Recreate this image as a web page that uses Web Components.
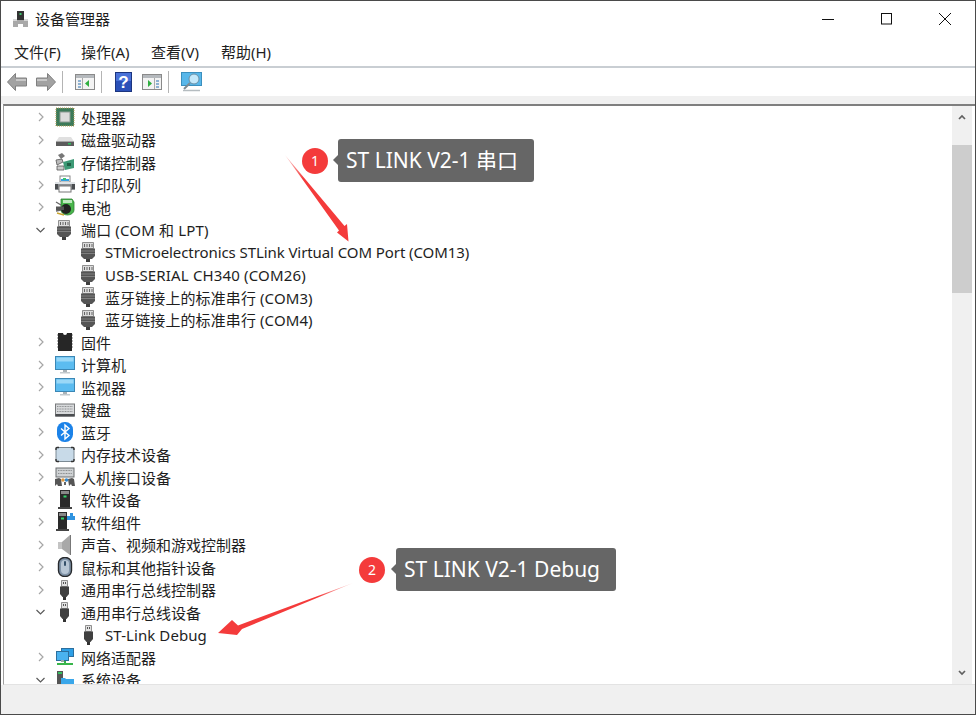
<!DOCTYPE html>
<html lang="zh">
<head>
<meta charset="utf-8">
<title>设备管理器</title>
<style>
  body { margin: 0; background: #fff; }
</style>
</head>
<body>
<device-window>
  <title-bar>设备管理器</title-bar>
  <menu-bar>
    <menu-item style="width:67px">文件(F)</menu-item>
    <menu-item style="width:70px">操作(A)</menu-item>
    <menu-item style="width:70px">查看(V)</menu-item>
    <menu-item>帮助(H)</menu-item>
  </menu-bar>
  <tool-bar></tool-bar>
  <tree-view>
    <tree-row icon="cpu">处理器</tree-row>
    <tree-row icon="disk">磁盘驱动器</tree-row>
    <tree-row icon="storage">存储控制器</tree-row>
    <tree-row icon="printer">打印队列</tree-row>
    <tree-row icon="battery">电池</tree-row>
    <tree-row icon="port" state="open" style="letter-spacing:.15px">端口 (COM 和 LPT)</tree-row>
    <tree-row icon="port" level="1" style="letter-spacing:-.08px">STMicroelectronics STLink Virtual COM Port (COM13)</tree-row>
    <tree-row icon="port" level="1" style="letter-spacing:.16px">USB-SERIAL CH340 (COM26)</tree-row>
    <tree-row icon="port" level="1" style="letter-spacing:.1px">蓝牙链接上的标准串行 (COM3)</tree-row>
    <tree-row icon="port" level="1" style="letter-spacing:.1px">蓝牙链接上的标准串行 (COM4)</tree-row>
    <tree-row icon="firmware">固件</tree-row>
    <tree-row icon="monitor">计算机</tree-row>
    <tree-row icon="monitor">监视器</tree-row>
    <tree-row icon="keyboard">键盘</tree-row>
    <tree-row icon="bluetooth">蓝牙</tree-row>
    <tree-row icon="memory">内存技术设备</tree-row>
    <tree-row icon="hid">人机接口设备</tree-row>
    <tree-row icon="software">软件设备</tree-row>
    <tree-row icon="component">软件组件</tree-row>
    <tree-row icon="sound">声音、视频和游戏控制器</tree-row>
    <tree-row icon="mouse">鼠标和其他指针设备</tree-row>
    <tree-row icon="usb">通用串行总线控制器</tree-row>
    <tree-row icon="usb" state="open">通用串行总线设备</tree-row>
    <tree-row icon="usb" level="1" style="letter-spacing:.08px">ST-Link Debug</tree-row>
    <tree-row icon="network">网络适配器</tree-row>
    <tree-row icon="system" state="open">系统设备</tree-row>
  </tree-view>
  <status-bar></status-bar>
  <red-arrow points="285,155 344.500,226 347,224 348.500,241.500 337,232.500 339,230.500" x1="285" y1="155" x2="345" y2="235"></red-arrow>
  <red-arrow points="353,583 242,629 237,635 218,633 232,620 238,625.500" x1="353" y1="583" x2="235" y2="628"></red-arrow>
  <note-tip num="1" style="left:301px;top:138px;--w:196px;--gap:10px">ST LINK V2-1 串口</note-tip>
  <note-tip num="2" style="left:358px;top:547px;--w:220px;--gap:11px">ST LINK V2-1 Debug</note-tip>
</device-window>

<script>
const ICONS = {
  cpu: `<rect x="1" y="1" width="18" height="18" fill="#3e7d5c" stroke="#b59b55" stroke-dasharray="1 1"/><rect x="2.500" y="2.500" width="15" height="15" fill="#3b7a58"/><rect x="5" y="5" width="10" height="10" fill="#dcdcdc" stroke="#8d9a94"/>`,
  disk: `<path d="M4 7h12l3 4.500H1z" fill="#e0e0e0"/><path d="M1 11.500h18V16H1z" fill="#5c5c5c"/><rect x="13" y="13" width="3" height="1.500" fill="#2fc060"/>`,
  storage: `<path d="M3 3l4-2 3 3-4 3z" fill="#777"/><path d="M1 8l6-1 1 3-6 3z" fill="#bbb" stroke="#555" stroke-width=".8"/><path d="M2 14h7v4H2z" fill="#ccc" stroke="#555" stroke-width=".8"/><path d="M8 10l11-3v9l-9 2z" fill="#3d9a76"/><rect x="12" y="11" width="4" height="3" fill="#1f5f45"/>`,
  printer: `<rect x="5" y="1" width="10" height="6" fill="#fff" stroke="#888"/><path d="M6 4h8v2H6z" fill="#35a0e0"/><path d="M8 3h3v2H8z" fill="#39c070"/><path d="M0 8h20v7H0z" fill="#8b8f93"/><path d="M0 7h20v2H0z" fill="#dfe3e6"/><rect x="4" y="11" width="12" height="6" fill="#fff" stroke="#777"/><rect x="0" y="9" width="3" height="5" fill="#4a4d50"/><rect x="17" y="9" width="3" height="5" fill="#4a4d50"/>`,
  battery: `<path d="M6 2h11l2 3v8a6.500 5 0 0 1-13 0z" fill="#49b64c" stroke="#2e7d32" stroke-width=".8"/><path d="M8 3h9v3H8z" fill="#bfe8bf"/><path d="M1 5l5 3M1 14l5-1" stroke="#666" stroke-width="1.300"/><circle cx="11" cy="12" r="5" fill="#222"/><path d="M1 9.500h8v3.500H1z" fill="#555"/><path d="M2 16l7 2" stroke="#c9a52d" stroke-width="1.500"/>`,
  port: `<path d="M3.500 .5h11v6h-11z" fill="#dcdcdc" stroke="#777" stroke-width=".8"/><path d="M5.500 2v3M8 2v3M10.500 2v3M13 2v3" stroke="#666"/><path d="M2 6.500h14V14l-3 3H5l-3-3z" fill="#555"/><path d="M2 9h14M2 11.500h14" stroke="#808080"/><rect x="7" y="17" width="4" height="3" fill="#3e3e3e"/>`,
  firmware: `<path d="M3 1h5a2 2 0 0 0 4 0h5v18H3z" fill="#262626"/><path d="M2 3h1M2 6h1M2 9h1M2 12h1M2 15h1M17 3h1M17 6h1M17 9h1M17 12h1M17 15h1" stroke="#777"/>`,
  monitor: `<rect x="0.500" y="1.500" width="19" height="13" fill="#5cbcf0" stroke="#3b87b5"/><rect x="1.500" y="2.500" width="17" height="4" fill="#9ad8f7"/><rect x="8" y="15" width="4" height="2" fill="#aab3b8"/><rect x="5" y="17" width="10" height="1.500" fill="#c3cace"/>`,
  keyboard: `<rect x="0.500" y="4" width="19" height="12" fill="#d7d9db" stroke="#77797b"/><path d="M2 6.500h16M2 9h16M2 11.500h16" stroke="#8d8f91" stroke-dasharray="1 .6"/><rect x="0.500" y="14" width="19" height="2.500" fill="#4a4d50"/>`,
  bluetooth: `<rect x="2" y="0" width="16" height="20" rx="7.500" fill="#1b82e8"/><path d="M6 6.500l8 7-4 3.500V3l4 3.500-8 7" fill="none" stroke="#fff" stroke-width="1.400"/>`,
  memory: `<rect x="1" y="2.500" width="18" height="14" rx="1.500" fill="#c8dae8" stroke="#7c8a94"/><path d="M1 5V3.500a1 1 0 0 1 1-1h2M16 2.500h2a1 1 0 0 1 1 1V5M19 14v1.500a1 1 0 0 1-1 1h-2M4 16.500H2a1 1 0 0 1-1-1V14" fill="none" stroke="#333" stroke-width="1.400"/>`,
  hid: `<rect x="1" y="1" width="18" height="9" fill="#cfd2d4" stroke="#6b6e70"/><path d="M3 3.500h14M3 6.500h14" stroke="#8a8d8f" stroke-dasharray="1 .6"/><path d="M0 12l4-1 2 1 1 7H3l-1-2-2 2z" fill="#555"/><path d="M13 12l4-1 2 1 1 7h-3l-1-2-2 2z" fill="#555"/><circle cx="8" cy="13" r="1.800" fill="#d94"/><circle cx="11.500" cy="13" r="1.800" fill="#38c"/><rect x="9" y="15" width="2" height="3" fill="#666"/>`,
  software: `<rect x="5" y="0" width="10" height="17" fill="#2a2a2a"/><rect x="6" y="1" width="8" height="3" fill="#888"/><rect x="8.500" y="5.500" width="3" height="2" fill="#33d46a"/><rect x="3" y="17" width="14" height="2" fill="#444"/>`,
  component: `<rect x="3" y="0" width="9" height="17" fill="#2a2a2a"/><rect x="4" y="1" width="7" height="3" fill="#888"/><rect x="6" y="5.500" width="3" height="2" fill="#33d46a"/><rect x="1" y="17" width="13" height="2" fill="#444"/><path d="M12 4h3V1h3v3h2v4h-8z" fill="#2f93e0"/>`,
  sound: `<path d="M3 7h4v7H3z" fill="#c4c4c4"/><path d="M7 7l8-7h1v20h-1l-8-6z" fill="#a8a8a8"/><path d="M15 0h1v20h-1z" fill="#777"/>`,
  mouse: `<rect x="3.500" y="0.500" width="13" height="19" rx="6" fill="#7f93a8" stroke="#26292c" stroke-width="1.400"/><rect x="6" y="3" width="8" height="14" rx="4" fill="#b7c6d5"/><rect x="9" y="4" width="2" height="5" rx="1" fill="#34506a"/>`,
  usb: `<path d="M6.500 .5h6v6h-6z" fill="#e2e2e2" stroke="#777" stroke-width=".8"/><rect x="8" y="2" width="1" height="2" fill="#555"/><rect x="10" y="2" width="1" height="2" fill="#555"/><path d="M5 6.500h9V14l-2.500 3h-4L5 14z" fill="#404040"/><rect x="8" y="17" width="3" height="3" fill="#333"/>`,
  network: `<rect x="6.500" y="1.500" width="12" height="8" fill="#2d9fe6" stroke="#2c6f9e"/><rect x="1.500" y="4.500" width="12" height="9" fill="#4ab2ef" stroke="#2c6f9e"/><rect x="6" y="13" width="3" height="2" fill="#9aa"/><path d="M10 14v3" stroke="#35b04a" stroke-width="2"/><rect x="2" y="16" width="16" height="2" fill="#38b54a"/>`,
  system: `<rect x="2" y="1" width="6" height="17" fill="#555"/><rect x="3" y="2" width="4" height="2" fill="#35c060"/><path d="M6 8h4l1 1h8v9H6z" fill="#3aa7ea"/>`
};

const TOOL_ICONS = {
  back: `<svg width="20" height="20" viewBox="0 0 20 20"><path d="M.5 10l8-8.500V6h11v8h-11v4.500z" fill="#a2a2a2" stroke="#808080"/><path d="M9 7h10v2H9z" fill="#c8c8c8"/></svg>`,
  forward: `<svg width="20" height="20" viewBox="0 0 20 20"><path d="M19.500 10l-8-8.500V6H.5v8h11v4.500z" fill="#a2a2a2" stroke="#808080"/><path d="M1 7h10v2H1z" fill="#c8c8c8"/></svg>`,
  panelLeft: `<svg width="20" height="18" viewBox="0 0 20 18"><rect x=".5" y="1.500" width="19" height="15" fill="#f3f3f3" stroke="#8a8a8a"/><rect x="1" y="2" width="18" height="3" fill="#b5b9bd"/><path d="M3 8h3M3 11h3M3 14h3" stroke="#6c9cc7" stroke-width="1.400"/><path d="M7.500 5v11" stroke="#aaa"/><path d="M10 10.500l4-3.500v7z" fill="#2fae3f"/></svg>`,
  panelRight: `<svg width="20" height="18" viewBox="0 0 20 18"><rect x=".5" y="1.500" width="19" height="15" fill="#f3f3f3" stroke="#8a8a8a"/><rect x="1" y="2" width="18" height="3" fill="#b5b9bd"/><path d="M14 8h3M14 11h3M14 14h3" stroke="#6c9cc7" stroke-width="1.400"/><path d="M12.500 5v11" stroke="#aaa"/><path d="M6 7l4 3.500-4 3.500z" fill="#2fae3f"/></svg>`,
  help: `<svg width="17" height="20" viewBox="0 0 17 20"><rect x=".5" y=".5" width="16" height="19" fill="#2a50b8" stroke="#1c357f"/><rect x="1" y="1" width="15" height="8" fill="#4a72d8"/><text x="8.500" y="16" text-anchor="middle" font-family="Liberation Sans, sans-serif" font-weight="700" font-size="17" fill="#fff">?</text></svg>`,
  scan: `<svg width="21" height="20" viewBox="0 0 21 20"><rect x=".5" y=".5" width="20" height="13" fill="#58b7ea" stroke="#3b8fbe"/><circle cx="13" cy="7" r="5" fill="#c4e8fa" stroke="#6a8fa5"/><path d="M9 11l-6 6" stroke="#7c8a92" stroke-width="2"/><path d="M2 18.500h17" stroke="#b5bcc0" stroke-width="1.500"/></svg>`
};

class DeviceWindow extends HTMLElement {
  constructor() {
    super();
    this.attachShadow({ mode: 'open' });
    this.shadowRoot.innerHTML = `
      <style>
        :host {
          display: flex;
          flex-direction: column;
          position: relative;
          width: 976px;
          height: 715px;
          box-sizing: border-box;
          border: 1px solid #4a4a4a;
          background: #fff;
          overflow: hidden;
          color: #1e1e1e;
          font-family: "Noto Sans", "Noto Sans CJK SC", sans-serif;
          font-size: 15px;
        }
      </style>
      <slot></slot>`;
  }
}

class TitleBar extends HTMLElement {
  constructor() {
    super();
    this.attachShadow({ mode: 'open' });
    this.shadowRoot.innerHTML = `
      <style>
        :host { display: flex; align-items: center; height: 36px; flex: none; padding-left: 11px; }
        .logo { width: 17px; height: 18px; margin-right: 6px; }
        .name { flex: 1; font-size: 15px; margin-bottom: 2px; }
        .btn { display: block; margin-right: 47px; }
        .btn:last-child { margin-right: 24px; }
      </style>
      <svg class="logo" viewBox="0 0 17 18">
        <rect x="5" y="1" width="7" height="9" fill="#333"/>
        <rect x="7.500" y="3" width="2" height="2" fill="#3fc46f"/>
        <path d="M1 9h4v1h7V9h4v8H11v-3H6v3H1z" fill="#a9a9a9"/>
        <path d="M1 9h4v2H1zM12 9h4v2h-4z" fill="#d8d8d8"/>
      </svg>
      <span class="name"><slot></slot></span>
      <svg class="btn" width="12" height="12" viewBox="0 0 12 12"><path d="M0 6.500h12" stroke="#111"/></svg>
      <svg class="btn" width="11" height="12" viewBox="0 0 11 12"><rect x=".5" y=".5" width="10" height="10.500" fill="none" stroke="#111"/></svg>
      <svg class="btn" width="12" height="12" viewBox="0 0 12 12"><path d="M0 0l12 12M12 0L0 12" stroke="#111"/></svg>`;
  }
}

class MenuBar extends HTMLElement {
  constructor() {
    super();
    this.attachShadow({ mode: 'open' });
    this.shadowRoot.innerHTML = `
      <style>
        :host {
          display: flex;
          align-items: center;
          flex: none;
          height: 29px;
          padding-left: 13px;
          border-bottom: 2px solid #c9ced3;
          font-size: 15px;
        }
      </style>
      <slot></slot>`;
  }
}

class MenuItem extends HTMLElement {
  constructor() {
    super();
    this.attachShadow({ mode: 'open' });
    this.shadowRoot.innerHTML = `<style>:host { display: block; }</style><slot></slot>`;
  }
}

class ToolBar extends HTMLElement {
  constructor() {
    super();
    this.attachShadow({ mode: 'open' });
    this.shadowRoot.innerHTML = `
      <style>
        :host {
          display: flex;
          align-items: center;
          flex: none;
          height: 28px;
          padding-left: 6px;
          background: #fff;
        }
        svg { display: block; flex: none; }
        .sep { width: 1px; height: 22px; background: #b4b4b4; flex: none; }
      </style>
      ${TOOL_ICONS.back}
      <span style="width:9px"></span>
      ${TOOL_ICONS.forward}
      <span style="width:6px"></span>
      <span class="sep"></span>
      <span style="width:12px"></span>
      ${TOOL_ICONS.panelLeft}
      <span style="width:6px"></span>
      <span class="sep"></span>
      <span style="width:13px"></span>
      ${TOOL_ICONS.help}
      <span style="width:10px"></span>
      ${TOOL_ICONS.panelRight}
      <span style="width:6px"></span>
      <span class="sep"></span>
      <span style="width:12px"></span>
      ${TOOL_ICONS.scan}`;
  }
}

class TreeView extends HTMLElement {
  constructor() {
    super();
    this.attachShadow({ mode: 'open' });
    this.shadowRoot.innerHTML = `
      <style>
        :host { display: block; flex: 1; min-height: 0; }
        .strip { height: 8px; background: #f0f0f0; }
        .frame {
          display: flex;
          height: 578px;
          margin-left: 2px;
          border-top: 2px solid #7f7f7f;
          border-left: 1px solid #a0a0a0;
          border-bottom: 1px solid #e3e3e3;
          overflow: hidden;
          padding-right: 3px;
        }
        .rows { flex: 1; min-width: 0; overflow: hidden; }
        .bar { width: 20px; flex: none; background: #f0f0f0; display: flex; flex-direction: column; }
        .arrow { height: 22px; display: flex; align-items: center; justify-content: center; flex: none; }
        .thumb { height: 148px; margin-top: 17px; background: #cdcdcd; flex: none; }
        .gap { flex: 1; }
      </style>
      <div class="strip"></div>
      <div class="frame">
        <div class="rows"><slot></slot></div>
        <div class="bar">
          <div class="arrow"><svg width="8" height="6" viewBox="0 0 8 6"><path d="M1 5l3-3 3 3" fill="none" stroke="#606060" stroke-width="1.700"/></svg></div>
          <div class="thumb"></div>
          <div class="gap"></div>
          <div class="arrow"><svg width="8" height="6" viewBox="0 0 8 6"><path d="M1 1l3 3 3-3" fill="none" stroke="#606060" stroke-width="1.700"/></svg></div>
        </div>
      </div>`;
  }
}

class TreeRow extends HTMLElement {
  constructor() {
    super();
    const level = Number(this.getAttribute('level') || 0);
    const state = this.getAttribute('state');
    let chevron = '';
    if (level === 0) {
      chevron = state === 'open'
        ? '<path d="M3.500 6l4 4 4-4" fill="none" stroke="#5a5a5a" stroke-width="1.200"/>'
        : '<path d="M6 4l4 4-4 4" fill="none" stroke="#a6a6a6" stroke-width="1.200"/>';
    }
    this.attachShadow({ mode: 'open' });
    this.shadowRoot.innerHTML = `
      <style>
        :host {
          display: flex;
          align-items: center;
          height: 22.5px;
          padding-left: ${29 + level * 24}px;
          white-space: nowrap;
        }
        svg { display: block; flex: none; }
        .chev { margin-right: 6px; }
        .icon { margin-right: 6px; }
      </style>
      <svg class="chev" width="16" height="16" viewBox="0 0 16 16">${chevron}</svg>
      <svg class="icon" width="20" height="20" viewBox="0 0 20 20">${ICONS[this.getAttribute('icon')]}</svg>
      <slot></slot>`;
  }
}

class StatusBar extends HTMLElement {
  constructor() {
    super();
    this.attachShadow({ mode: 'open' });
    this.shadowRoot.innerHTML = `
      <style>
        :host { display: block; flex: none; height: 29px; background: #f0f0f0; }
      </style>`;
  }
}

class NoteTip extends HTMLElement {
  constructor() {
    super();
    this.attachShadow({ mode: 'open' });
    this.shadowRoot.innerHTML = `
      <style>
        :host {
          position: absolute;
          display: flex;
          align-items: center;
          gap: var(--gap);
          height: 43px;
          font-size: 21px;
          color: #fff;
          white-space: nowrap;
        }
        .num {
          width: 26px;
          height: 26px;
          border-radius: 50%;
          background: #f43b3b;
          display: flex;
          align-items: center;
          justify-content: center;
          font-size: 14px;
          flex: none;
        }
        .box {
          position: relative;
          box-sizing: border-box;
          width: var(--w);
          height: 43px;
          padding-left: 8px;
          line-height: 42px;
          background: #666;
          border-radius: 3px;
        }
        .box::before {
          content: "";
          position: absolute;
          left: -5px;
          top: 16px;
          border: 5px solid transparent;
          border-left: 0;
          border-right-color: #666;
        }
      </style>
      <span class="num">${this.getAttribute('num')}</span>
      <span class="box"><slot></slot></span>`;
  }
}

class RedArrow extends HTMLElement {
  constructor() {
    super();
    const id = 'fade';
    const a = (name) => this.getAttribute(name);
    this.attachShadow({ mode: 'open' });
    this.shadowRoot.innerHTML = `
      <style>
        :host { position: absolute; left: -1px; top: -1px; width: 976px; height: 715px; pointer-events: none; }
        svg { display: block; }
      </style>
      <svg width="976" height="715" viewBox="0 0 976 715">
        <defs>
          <linearGradient id="${id}" gradientUnits="userSpaceOnUse" x1="${a('x1')}" y1="${a('y1')}" x2="${a('x2')}" y2="${a('y2')}">
            <stop offset="0" stop-color="#f43b3b" stop-opacity=".2"/>
            <stop offset=".3" stop-color="#f43b3b"/>
          </linearGradient>
        </defs>
        <polygon points="${a('points')}" fill="url(#${id})"/>
      </svg>`;
  }
}

customElements.define('device-window', DeviceWindow);
customElements.define('title-bar', TitleBar);
customElements.define('menu-bar', MenuBar);
customElements.define('menu-item', MenuItem);
customElements.define('tool-bar', ToolBar);
customElements.define('tree-view', TreeView);
customElements.define('tree-row', TreeRow);
customElements.define('status-bar', StatusBar);
customElements.define('note-tip', NoteTip);
customElements.define('red-arrow', RedArrow);
</script>
</body>
</html>
